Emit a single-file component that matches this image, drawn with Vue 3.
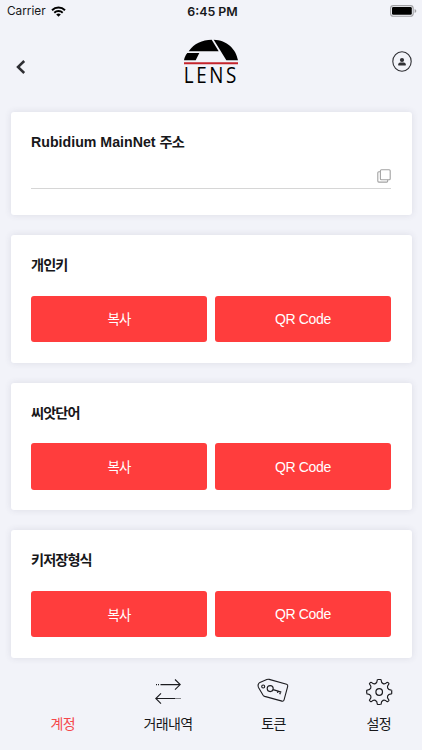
<script setup>
const sections = [
  { id: 'private-key', title: '개인키' },
  { id: 'seed-words', title: '씨앗단어' },
  { id: 'keystore', title: '키저장형식' },
]

const tabs = [
  { id: 'account', label: '계정' },
  { id: 'history', label: '거래내역' },
  { id: 'token', label: '토큰' },
  { id: 'settings', label: '설정' },
]

const activeTab = 'account'
</script>

<template>
  <div class="screen">
    <div class="status-bar">
      <div class="carrier">
        <span>Carrier</span>
        <svg width="15" height="11" viewBox="0 0 15 11">
          <path d="M1 4.2a9.4 9.4 0 0 1 13 0" fill="none" stroke="#000" stroke-width="2" />
          <path d="M3.3 6.7a6.1 6.1 0 0 1 8.4 0" fill="none" stroke="#000" stroke-width="1.9" />
          <path d="M5.2 8.5a3.4 3.4 0 0 1 4.6 0L7.5 10.8z" />
        </svg>
      </div>
      <span class="time">6:45 PM</span>
      <svg class="battery" width="27" height="12" viewBox="0 0 27 12">
        <rect x=".6" y=".6" width="22.6" height="10.6" rx="2.8" fill="none" stroke="#a0a0a4" stroke-width="1.1" />
        <rect x="2" y="2" width="19.8" height="7.8" rx="1.3" />
        <path d="M24.6 4v4c1.2-.5 1.7-1.1 1.7-2s-.5-1.5-1.7-2z" fill="#a0a0a4" />
      </svg>
    </div>

    <header class="header">
      <button class="icon-button back" aria-label="back">
        <svg width="10" height="14" viewBox="0 0 10 14">
          <path d="M8.2 1L2 7l6.2 6" fill="none" stroke="#2e2e33" stroke-width="2.5" />
        </svg>
      </button>
      <svg class="logo" width="56" height="52" viewBox="0 0 168 156">
        <path d="M17 37C32 14 58 2 86 2L107 37z" />
        <path d="M13 42H49L38 64H3C4 56 8 48 13 42z" />
        <path d="M92 2C132 3 160 31 165 64H130L94 5z" />
        <path d="M3 73H165" stroke="#c4242c" stroke-width="6" />
        <text transform="translate(2.5 131) scale(.88 1)" class="logo-text">LENS</text>
      </svg>
      <button class="icon-button" aria-label="profile">
        <svg width="20" height="21" viewBox="0 0 20 21">
          <ellipse cx="10" cy="10.5" rx="9.2" ry="9.7" fill="none" stroke="#303035" stroke-width="1.1" />
          <circle cx="10" cy="9" r="2.1" fill="#303035" />
          <path d="M6.3 14.6v-1.3q0-1.8 1.9-1.8h3.6q1.9 0 1.9 1.8v1.3z" fill="#303035" />
        </svg>
      </button>
    </header>

    <main class="cards">
      <section class="card address-card">
        <h2>Rubidium MainNet <span class="korean">주소</span></h2>
        <div class="address">
          <svg width="14" height="14" viewBox="0 0 14 14" fill="none" stroke="#a3a3a3" stroke-width="1.1">
            <rect x="3.4" y=".8" width="9.8" height="9.9" rx="1" />
            <path d="M3.4 2.8H1.8q-1 0-1 1v8.3q0 1 1 1h7.9q1 0 1-1v-1.4" />
          </svg>
        </div>
      </section>

      <section v-for="section in sections" :key="section.id" class="card">
        <h2 class="korean">{{ section.title }}</h2>
        <div class="actions">
          <button class="action copy">복사</button>
          <button class="action">QR Code</button>
        </div>
      </section>
    </main>

    <nav class="tabs">
      <a v-for="tab in tabs" :key="tab.id" class="tab" :class="{ active: tab.id === activeTab }">
        <span class="tab-icon">
          <svg v-if="tab.id === 'history'" width="28" height="28" viewBox="0 0 28 28" fill="none" stroke="#1c1c20" stroke-width="1.1">
            <path d="M7 6.6h19M21 1.5l5.2 5.1L21 11.7M21 20.5H2M7 15.4l-5.2 5.1L7 25.6" />
            <path d="M2 6.6h4.5M21.5 20.5h5" stroke-dasharray="1 1" />
          </svg>
          <svg v-else-if="tab.id === 'token'" width="32" height="28" viewBox="0 0 32 28" fill="none" stroke="#1c1c20" stroke-width="1.1">
            <path d="M9.8 1.5Q11 1.1 12.2 1.4L29.6 6.3q1.5.5 1.1 2L27 22.1q-.5 1.4-2 1L7.7 18.4q-1-.3-1.6-1.2L1.5 9.5Q.7 7.9 1.3 6.3q.3-1.3 1.6-1.9z" />
            <circle cx="6.2" cy="8.5" r="1.5" />
            <circle cx="13.2" cy="10.6" r="3" />
            <path d="M16.1 11.6l8.2 2.5M23.5 13.9l-.7 2.3M21 13.2l-.5 1.7" stroke-width="1.3" />
          </svg>
          <svg v-else-if="tab.id === 'settings'" width="28" height="28" viewBox="0 0 28 28" fill="none" stroke="#1c1c20" stroke-width="1.2" stroke-linejoin="round">
            <g transform="translate(14.2 14)">
              <path
                v-for="angle in [0, 90, 180, 270]"
                :key="angle"
                :transform="`rotate(${angle})`"
                d="M-1.4-12.5H1.4Q1.9-12.5 1.9-12C2-10 2.5-9 3.9-8.4S6.5-8.4 7.8-9.6Q8.2-9.9 8.6-9.6L9.6-8.6Q9.9-8.2 9.6-7.8C8.4-6.5 7.8-5.3 8.4-3.9S10-2 12-1.9Q12.5-1.9 12.5-1.4"
              />
              <circle r="3.3" />
            </g>
          </svg>
        </span>
        <span class="tab-label">{{ tab.label }}</span>
      </a>
    </nav>
  </div>
</template>

<style>
body {
  margin: 0;
  background: #f2f3f9;
}
</style>

<style scoped>
.screen {
  display: flex;
  flex-direction: column;
  width: 422px;
  height: 750px;
  overflow: hidden;
  background: #f2f3f9;
  color: #17171a;
  font-family: "Liberation Sans", "Noto Sans CJK KR", sans-serif;
}

button {
  margin: 0;
  padding: 0;
  border: 0;
  font: inherit;
}

.status-bar {
  display: grid;
  grid-template-columns: 1fr auto 1fr;
  align-items: center;
  height: 22px;
  padding: 0 5px 0 7px;
  font-family: Inter, sans-serif;
  font-size: 11.8px;
}

.carrier {
  display: flex;
  align-items: center;
  gap: 5px;
}

.time {
  padding-left: 1px;
  font-weight: 600;
  font-size: 12.4px;
}

.battery {
  justify-self: end;
}

.header {
  display: flex;
  justify-content: space-between;
  height: 90px;
  padding: 0 10px 0 16px;
  box-sizing: border-box;
}

.icon-button {
  width: 20px;
  height: 21px;
  margin-top: 29px;
  background: none;
}

.icon-button.back {
  display: flex;
  width: 14px;
  height: 14px;
  margin-top: 38px;
}

.logo {
  margin-top: 17px;
}

.logo-text {
  font-family: "Open Sans", sans-serif;
  font-size: 64px;
  letter-spacing: 9px;
}

.cards {
  display: flex;
  flex-direction: column;
  gap: 20.3px;
  padding: 0 10.5px;
}

.card {
  height: 127.3px;
  padding: 19px 20.5px 0;
  box-sizing: border-box;
  border-radius: 3px;
  background: #fff;
  box-shadow: 0 0 7px rgba(60, 60, 90, 0.12);
}

.card h2 {
  margin: 0;
  font-size: 14.2px;
  line-height: 22px;
  font-weight: 700;
}

.card .korean {
  letter-spacing: -0.9px;
}

.address-card {
  height: 103px;
}

.address {
  display: flex;
  justify-content: flex-end;
  align-items: flex-end;
  height: 35px;
  border-bottom: 1.5px solid #d6d6d6;
}

.address svg {
  margin-bottom: 5px;
}

.actions {
  display: flex;
  gap: 7.5px;
  margin-top: 19.3px;
}

.action {
  flex: 1;
  height: 46.7px;
  border-radius: 3px;
  background: #ff3d3d;
  color: #fff;
  font-size: 14px;
  letter-spacing: -0.35px;
}

.action.copy {
  padding-bottom: 1px;
  font-size: 13.4px;
  letter-spacing: -0.8px;
}

.tabs {
  display: flex;
  padding: 20px 0 0 10px;
}

.tab {
  flex: 0 0 105.4px;
  display: flex;
  flex-direction: column;
  align-items: center;
  font-size: 14px;
  line-height: 20px;
}

.tab-label {
  letter-spacing: -0.6px;
}

.tab.active {
  color: #f5474b;
}

.tab-icon {
  height: 28px;
  margin-bottom: 8px;
}

.tab-icon svg {
  display: block;
}
</style>
